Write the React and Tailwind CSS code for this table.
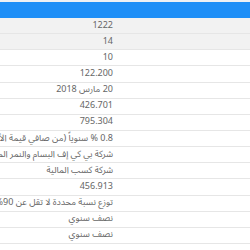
import React from 'react';

const rows = [
  { value: '1222', shaded: true },
  { value: '14', shaded: true },
  { value: '10' },
  { value: '122.200' },
  { value: '20 مارس 2018' },
  { value: '426.701' },
  { value: '795.304' },
  { value: '0.8 % سنوياً (من صافي قيمة الأصول بعد خصم المصاريف)' },
  { value: 'شركة بي كي إف البسام والنمر المحاسبون المتحالفون' },
  { value: 'شركة كسب المالية' },
  { value: '456.913' },
  { value: 'توزع نسبة محددة لا تقل عن 90% من صافي الأرباح' },
  { value: 'نصف سنوي' },
  { value: 'نصف سنوي' },
];

const App = () => {
  return (
    <div className="w-[250px] h-[250px] overflow-hidden bg-white" style={{ fontFamily: '"Noto Sans Arabic", "Open Sans", "DejaVu Sans", sans-serif' }}>
      <div className="h-[2px] bg-[#eef1f4]" />
      <div className="h-[16px] bg-[#1e8ff7]" />
      <div dir="rtl">
        {rows.map((row, i) => (
          <div
            key={i}
            className={`flex items-center h-[16.15px] border-b border-[#e6e6e6] ${row.shaded ? 'bg-[#f2f2f2]' : 'bg-white'}`}
          >
            <div className="w-[137px] shrink-0" />
            <div className="whitespace-nowrap text-[9px] leading-[10px] text-[#666]">{row.value}</div>
          </div>
        ))}
      </div>
    </div>
  );
};

export default App;
